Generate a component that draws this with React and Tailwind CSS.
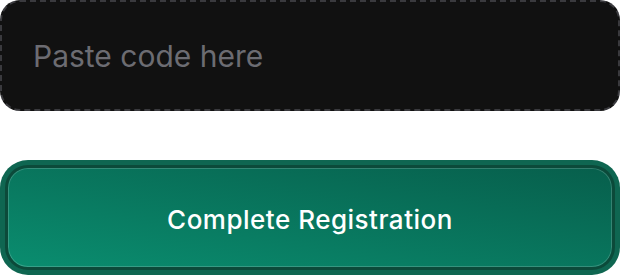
export default function App() {
  return (
    <div className="flex w-[620px] flex-col gap-[49px] bg-white" style={{ fontFamily: "Inter, 'Noto Sans', sans-serif" }}>
      <div className="flex h-[111px] items-center rounded-[20px] border-2 border-dashed border-[#3a3a3e] bg-[#111111] px-[31px]">
        <input
          type="text"
          placeholder="Paste code here"
          className="w-full bg-transparent pt-[2px] text-[30px] text-white outline-none placeholder:text-[#6c6c72]"
        />
      </div>
      <div className="rounded-[28px] bg-[#0f6651] p-[5px]">
        <button
          type="button"
          className="flex h-[105px] w-full items-center justify-center rounded-[23px] border-[3px] border-[#0c4a3a] bg-gradient-to-tr from-[#0a8d6f] to-[#075f4c] pt-[4px] text-[26px] font-medium tracking-[0.5px] text-white shadow-[inset_0_0_0_1px_rgba(255,255,255,0.18)]"
        >
          Complete Registration
        </button>
      </div>
    </div>
  );
}
